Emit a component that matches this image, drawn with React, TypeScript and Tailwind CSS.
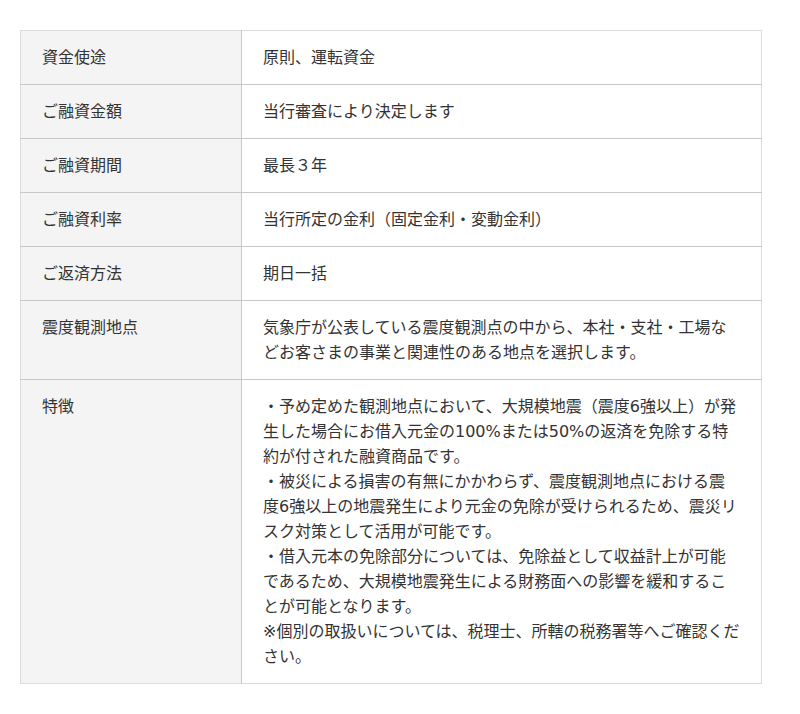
const rows: { label: string; body: string[] }[] = [
  { label: "資金使途", body: ["原則、運転資金"] },
  { label: "ご融資金額", body: ["当行審査により決定します"] },
  { label: "ご融資期間", body: ["最長３年"] },
  { label: "ご融資利率", body: ["当行所定の金利（固定金利・変動金利）"] },
  { label: "ご返済方法", body: ["期日一括"] },
  {
    label: "震度観測地点",
    body: ["気象庁が公表している震度観測点の中から、本社・支社・工場などお客さまの事業と関連性のある地点を選択します。"],
  },
  {
    label: "特徴",
    body: [
      "・予め定めた観測地点において、大規模地震（震度6強以上）が発生した場合にお借入元金の100%または50%の返済を免除する特約が付された融資商品です。",
      "・被災による損害の有無にかかわらず、震度観測地点における震度6強以上の地震発生により元金の免除が受けられるため、震災リスク対策として活用が可能です。",
      "・借入元本の免除部分については、免除益として収益計上が可能であるため、大規模地震発生による財務面への影響を緩和することが可能となります。",
      "※個別の取扱いについては、税理士、所轄の税務署等へご確認ください。",
    ],
  },
];

export default function App() {
  return (
    <div
      className="bg-white w-[800px] h-[714px] pt-[30px] pl-[20px] text-[#333] text-[16px] leading-[25px]"
      style={{ fontFamily: '"DejaVu Sans", "Noto Sans CJK JP", sans-serif' }}
    >
      <table className="w-[742px] border-collapse border border-[#dcdcdc]">
        <tbody>
          {rows.map((r, i) => (
            <tr key={i} className="border-b border-[#c8c8c8] last:border-b-[#dcdcdc]">
              <th className="w-[221px] bg-[#f4f4f4] border-r border-[#c8c8c8] text-left font-normal align-top px-[21px] py-[14px]">
                {r.label}
              </th>
              <td className="align-top pl-[21px] pr-[20px] py-[14px]">
                {r.body.map((t, j) => (
                  <div key={j}>{t}</div>
                ))}
              </td>
            </tr>
          ))}
        </tbody>
      </table>
    </div>
  );
}
